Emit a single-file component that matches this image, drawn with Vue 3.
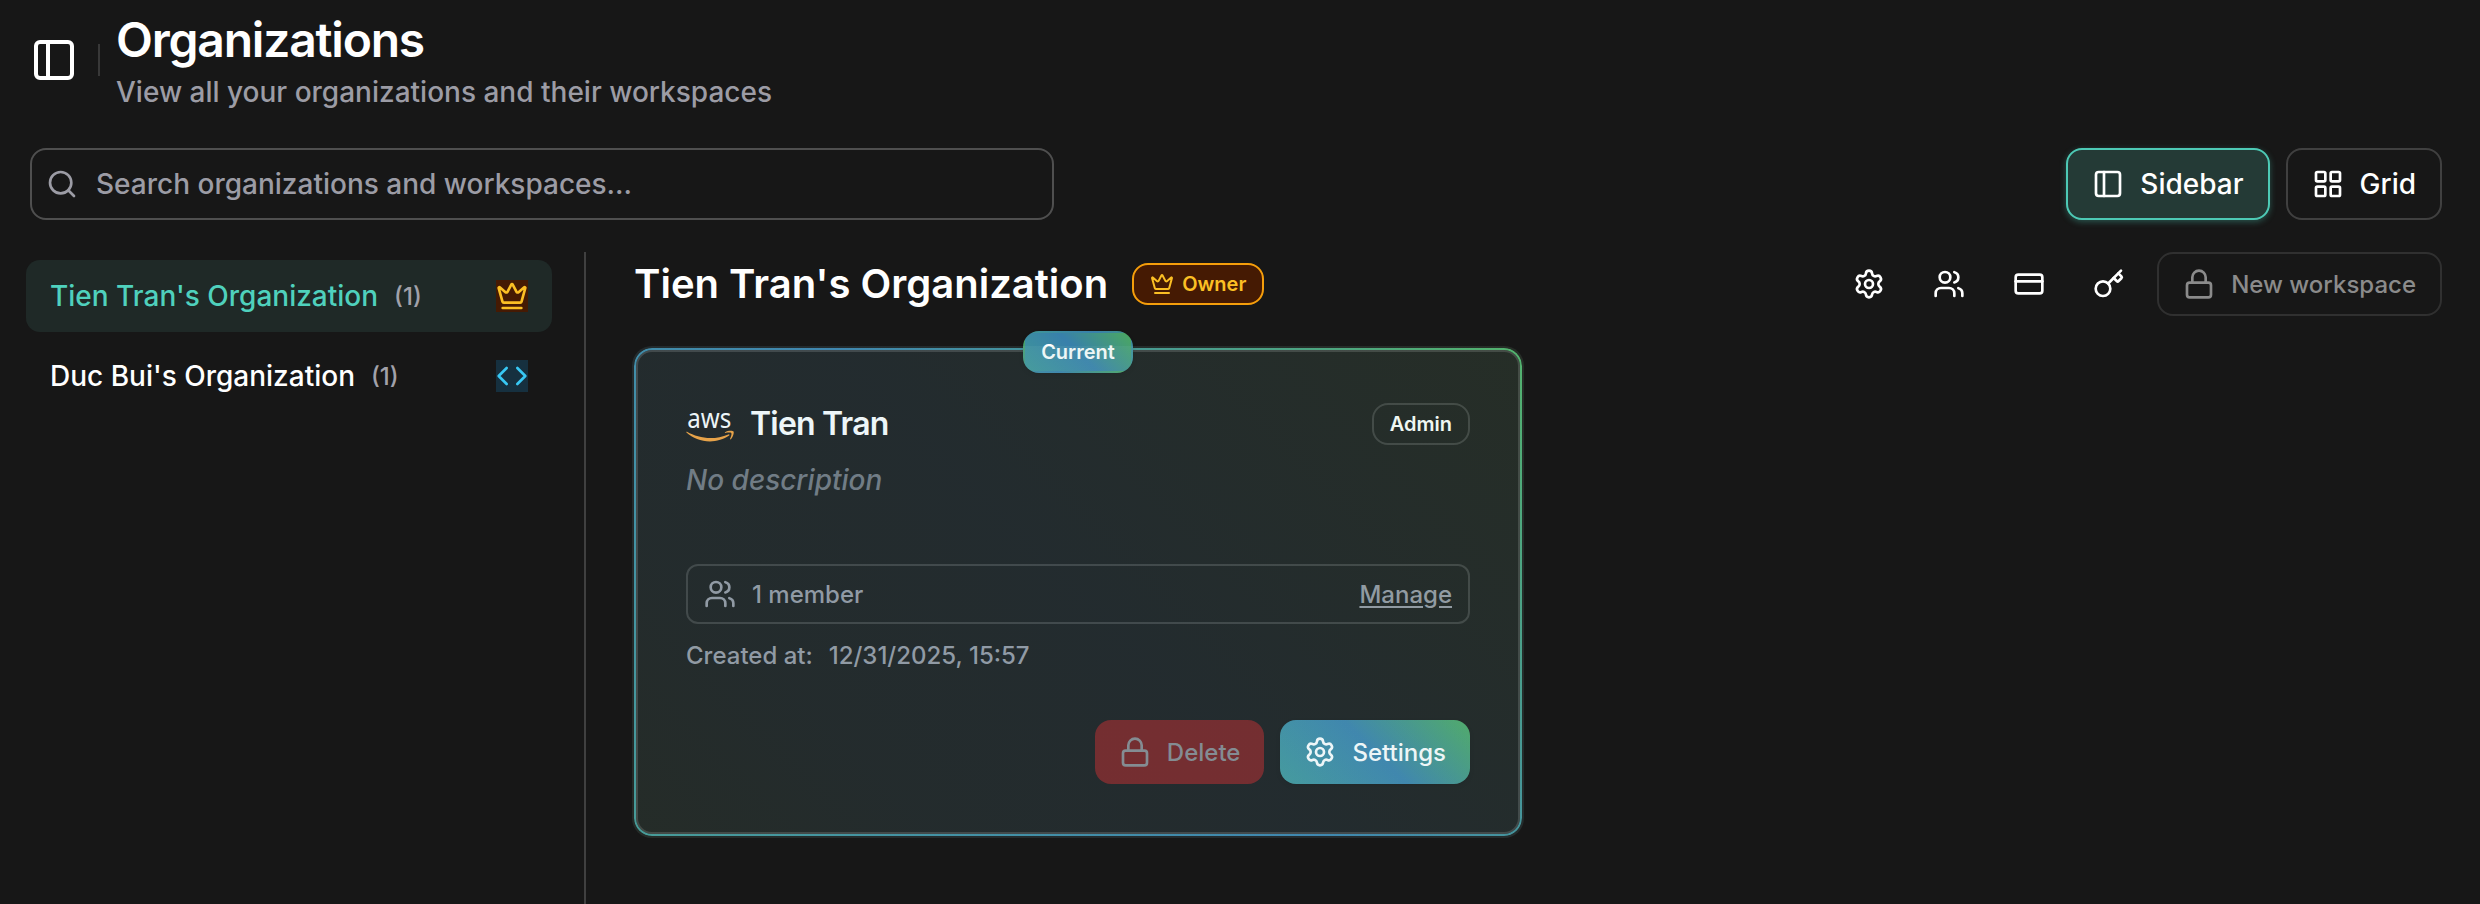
<script setup>
import { h } from 'vue'

const shapes = {
  panel: [['rect', { x: 3, y: 3, width: 18, height: 18, rx: 2 }], ['path', { d: 'M9 3v18' }]],
  search: [['circle', { cx: 11, cy: 11, r: 8 }], ['path', { d: 'm21 21-4.3-4.3' }]],
  grid: [
    ['rect', { x: 3, y: 3, width: 7, height: 7, rx: 1 }],
    ['rect', { x: 14, y: 3, width: 7, height: 7, rx: 1 }],
    ['rect', { x: 14, y: 14, width: 7, height: 7, rx: 1 }],
    ['rect', { x: 3, y: 14, width: 7, height: 7, rx: 1 }],
  ],
  crown: [
    ['path', { d: 'M11.562 3.266a.5.5 0 0 1 .876 0L15.39 8.87a1 1 0 0 0 1.516.294L21.183 5.5a.5.5 0 0 1 .798.519l-2.834 10.246a1 1 0 0 1-.956.734H5.81a1 1 0 0 1-.957-.734L2.02 6.02a.5.5 0 0 1 .798-.519l4.276 3.664a1 1 0 0 0 1.516-.294z' }],
    ['path', { d: 'M5 21h14' }],
  ],
  code: [['path', { d: 'm16 18 6-6-6-6' }], ['path', { d: 'm8 6-6 6 6 6' }]],
  gear: [
    ['path', { d: 'M9.671 4.136a2.34 2.34 0 0 1 4.659 0 2.34 2.34 0 0 0 3.319 1.915 2.34 2.34 0 0 1 2.33 4.033 2.34 2.34 0 0 0 0 3.831 2.34 2.34 0 0 1-2.33 4.033 2.34 2.34 0 0 0-3.319 1.915 2.34 2.34 0 0 1-4.659 0 2.34 2.34 0 0 0-3.32-1.915 2.34 2.34 0 0 1-2.33-4.033 2.34 2.34 0 0 0 0-3.831A2.34 2.34 0 0 1 6.35 6.051a2.34 2.34 0 0 0 3.319-1.915' }],
    ['circle', { cx: 12, cy: 12, r: 3 }],
  ],
  users: [
    ['path', { d: 'M16 21v-2a4 4 0 0 0-4-4H6a4 4 0 0 0-4 4v2' }],
    ['circle', { cx: 9, cy: 7, r: 4 }],
    ['path', { d: 'M22 21v-2a4 4 0 0 0-3-3.87' }],
    ['path', { d: 'M16 3.13a4 4 0 0 1 0 7.75' }],
  ],
  billing: [['rect', { x: 2, y: 5, width: 20, height: 14, rx: 2 }], ['path', { d: 'M2 10h20' }]],
  key: [
    ['path', { d: 'm15.5 7.5 2.3 2.3a1 1 0 0 0 1.4 0l2.1-2.1a1 1 0 0 0 0-1.4L19 4' }],
    ['path', { d: 'm21 2-9.6 9.6' }],
    ['circle', { cx: 7.5, cy: 15.5, r: 5.5 }],
  ],
  lock: [['rect', { x: 3, y: 11, width: 18, height: 11, rx: 2 }], ['path', { d: 'M7 11V7a5 5 0 0 1 10 0v4' }]],
}

const Icon = ({ name, size = 32, stroke = 2 }) =>
  h(
    'svg',
    {
      width: size, height: size, viewBox: '0 0 24 24', fill: 'none', stroke: 'currentColor',
      'stroke-width': stroke, 'stroke-linecap': 'round', 'stroke-linejoin': 'round',
    },
    shapes[name].map(([tag, attrs]) => h(tag, attrs)),
  )
Icon.props = ['name', 'size', 'stroke']

const organizations = [
  { name: "Tien Tran's Organization", count: 1, icon: 'crown', role: 'owner', active: true },
  { name: "Duc Bui's Organization", count: 1, icon: 'code', role: 'developer', active: false },
]
const actions = ['gear', 'users', 'billing', 'key']
</script>

<template>
  <div class="page">
    <header class="header">
      <Icon name="panel" :size="48" />
      <span class="header-rule"></span>
      <div>
        <h1>Organizations</h1>
        <p class="subtitle">View all your organizations and their workspaces</p>
      </div>
    </header>

    <div class="toolbar">
      <div class="search">
        <Icon name="search" />
        <span class="placeholder">Search organizations and workspaces...</span>
      </div>
      <div class="views">
        <button class="btn view selected"><Icon name="panel" /><span>Sidebar</span></button>
        <button class="btn view"><Icon name="grid" /><span>Grid</span></button>
      </div>
    </div>

    <div class="body">
      <nav class="orgs">
        <div v-for="org in organizations" :key="org.name" class="org" :class="{ active: org.active }">
          <span class="org-name">{{ org.name }}</span>
          <span class="org-count">({{ org.count }})</span>
          <span class="role" :class="org.role"><Icon :name="org.icon" /></span>
        </div>
      </nav>

      <main class="main">
        <div class="main-head">
          <h2>Tien Tran's Organization</h2>
          <span class="badge owner-badge"><Icon name="crown" :size="24" /><span>Owner</span></span>
          <div class="actions">
            <button v-for="a in actions" :key="a" class="icon-btn"><Icon :name="a" /></button>
            <button class="btn new"><Icon name="lock" /><span>New workspace</span></button>
          </div>
        </div>

        <section class="card">
          <span class="ring"></span>
          <span class="badge current"><span>Current</span></span>
          <div class="card-head">
            <svg class="aws" width="48" height="36" viewBox="0 0 48 36">
              <text x="1.2" y="21.9" textLength="44" lengthAdjust="spacingAndGlyphs">aws</text>
              <g transform="translate(0 6.9) scale(.1579)" fill="#f7a037">
                <path d="M273.5,143.7c-32.9,24.3-80.7,37.2-121.8,37.2c-57.6,0-109.5-21.3-148.7-56.7c-3.1-2.8-0.3-6.6,3.4-4.4c42.4,24.6,94.7,39.5,148.8,39.5c36.5,0,76.6-7.6,113.5-23.2C274.2,133.6,278.9,139.7,273.5,143.7z" />
                <path d="M287.2,128.1c-4.2-5.4-27.8-2.6-38.5-1.3c-3.2,0.4-3.7-2.4-0.8-4.5c18.8-13.2,49.7-9.4,53.3-5c3.6,4.5-1,35.4-18.6,50.2c-2.7,2.3-5.3,1.1-4.1-1.9C282.5,155.7,291.4,133.4,287.2,128.1z" />
              </g>
            </svg>
            <h3>Tien Tran</h3>
            <span class="badge admin"><span>Admin</span></span>
          </div>
          <p class="description">No description</p>
          <div class="members">
            <Icon name="users" />
            <span class="count">1 member</span>
            <a class="manage">Manage</a>
          </div>
          <p class="created"><span>Created at:</span><span>12/31/2025, 15:57</span></p>
          <div class="card-actions">
            <button class="btn delete"><Icon name="lock" /><span>Delete</span></button>
            <button class="btn settings"><Icon name="gear" /><span>Settings</span></button>
          </div>
          <span class="tint"></span>
        </section>
      </main>
    </div>
  </div>
</template>

<style>
body {
  background: #171717;
}
</style>

<style scoped>
.page {
  width: 2480px;
  height: 904px;
  overflow: hidden;
  display: flex;
  flex-direction: column;
  background: #171717;
  color: #fff;
  font-family: Inter, 'Liberation Sans', sans-serif;
  font-size: 28px;
}
.page * {
  box-sizing: border-box;
}
svg {
  flex: none;
  display: block;
  overflow: visible;
}
h1, h2, h3, p {
  margin: 0;
  white-space: nowrap;
}
.header {
  display: flex;
  align-items: center;
  height: 120px;
  padding-left: 30px;
}
.header-rule {
  width: 2px;
  height: 32px;
  margin: 0 16px 0 20px;
  background: #383838;
}
h1 {
  font-size: 48px;
  line-height: 64px;
  font-weight: 600;
  letter-spacing: -1.2px;
}
.subtitle {
  line-height: 40px;
  font-weight: 500;
  color: #9c9ca5;
}
.toolbar {
  display: flex;
  justify-content: space-between;
  height: 72px;
  margin: 28px 38px 0 30px;
}
.search {
  width: 1024px;
  display: flex;
  align-items: center;
  gap: 18px;
  padding-left: 14px;
  border: 2px solid #4f4f4f;
  border-radius: 16px;
  color: #9c9ca5;
}
.placeholder {
  font-weight: 500;
}
.views {
  display: flex;
  gap: 16px;
}
.btn {
  display: flex;
  align-items: center;
  gap: 16px;
  padding: 0 24px;
  border: 2px solid transparent;
  border-radius: 16px;
  background: transparent;
  color: #fff;
  font-family: inherit;
  font-size: 24px;
  font-weight: 500;
  white-space: nowrap;
}
.view {
  font-size: 28px;
  border-color: #404040;
}
.view.selected {
  border-color: #4dc9b5;
  background: #243a36;
  box-shadow: 0 2px 6px rgba(77, 201, 181, 0.35);
}
.body {
  flex: 1;
  display: flex;
  margin-top: 32px;
}
.orgs {
  width: 586px;
  padding: 8px 32px 0 26px;
  border-right: 2px solid #404040;
  display: flex;
  flex-direction: column;
  gap: 8px;
}
.org {
  display: flex;
  align-items: center;
  height: 72px;
  padding: 0 24px;
  border-radius: 14px;
  font-weight: 500;
}
.org.active {
  background: #1f2927;
  color: #4fd1bd;
}
.org-count {
  margin-left: 16px;
  color: #a1a1aa;
  font-size: 24px;
}
.role {
  margin-left: auto;
}
.role.owner {
  color: #fbbf24;
  background: #451a03;
}
.role.developer {
  color: #38c8f4;
  background: #16303f;
}
.main {
  flex: 1;
  padding: 0 38px 0 48px;
}
.main-head {
  display: flex;
  align-items: center;
  height: 64px;
}
h2 {
  font-size: 40px;
  line-height: 56px;
  font-weight: 600;
}
.badge {
  display: inline-flex;
  align-items: center;
  justify-content: center;
  height: 42px;
  padding: 0 16px;
  border: 2px solid transparent;
  border-radius: 16px;
  font-size: 20px;
  font-weight: 600;
}
.owner-badge {
  gap: 8px;
  margin-left: 24px;
  border-color: #f59e0b;
  background: #451a03;
  color: #fbbf24;
}
.actions {
  display: flex;
  gap: 16px;
  height: 64px;
  margin-left: auto;
}
.icon-btn {
  width: 64px;
  display: flex;
  align-items: center;
  justify-content: center;
  padding: 0;
  border: 0;
  background: none;
  color: #fff;
}
.new {
  border-color: #303030;
  color: #8b8b8b;
}
.card {
  position: relative;
  width: 884px;
  height: 484px;
  margin: 34px 0 0 2px;
  padding: 48px;
  border: 2px solid #3a3a3a;
  border-radius: 16px;
}
.current {
  position: absolute;
  top: -21px;
  left: 50%;
  width: 110px;
  transform: translateX(-50%);
  background: linear-gradient(45deg, #3f9797, #3880ab 50%, #4ba860);
  box-shadow: 0 2px 4px rgba(0, 0, 0, 0.15);
}
.card-head {
  display: flex;
  align-items: center;
  height: 48px;
}
.aws text {
  font-family: 'Noto Sans', sans-serif;
  font-size: 28px;
  fill: #fff;
}
h3 {
  margin-left: 16px;
  font-size: 32px;
  line-height: 48px;
  font-weight: 600;
  letter-spacing: -0.8px;
}
.admin {
  margin-left: auto;
  border-color: #3a3a3a;
}
.description {
  margin-top: 12px;
  line-height: 40px;
  font-style: italic;
  font-weight: 500;
  color: #70747c;
}
.members {
  display: flex;
  align-items: center;
  height: 60px;
  margin-top: 64px;
  padding: 0 16px;
  border: 2px solid #3a3a3a;
  border-radius: 12px;
  color: #9496a0;
  font-size: 24px;
  font-weight: 500;
}
.count {
  margin-left: 16px;
}
.manage {
  margin-left: auto;
  text-decoration: underline;
  text-underline-offset: 3px;
}
.created {
  display: flex;
  gap: 16px;
  margin-top: 16px;
  line-height: 32px;
  font-size: 24px;
  font-weight: 500;
  color: #9496a0;
}
.card-actions {
  display: flex;
  justify-content: flex-end;
  gap: 16px;
  height: 64px;
  margin-top: 48px;
}
.card-actions .btn {
  border: 0;
}
.delete {
  background: #741a1a;
  color: #86868a;
}
.settings {
  background: linear-gradient(45deg, #3f9797, #3880ab 50%, #4ba860);
  box-shadow: 0 2px 4px rgba(0, 0, 0, 0.15);
}
.tint {
  position: absolute;
  inset: -6px;
  border-radius: 20px;
  background: linear-gradient(45deg, rgb(130 185 155 / 13%), rgb(120 181 192 / 13%) 22%, rgb(115 181 206 / 13%) 50%, rgb(138 200 146 / 13%));
  pointer-events: none;
}
.ring {
  position: absolute;
  inset: -4px;
  padding: 2px;
  border-radius: 18px;
  background: linear-gradient(45deg, #3f9797, #3880ab 50%, #4bb068);
  mask: linear-gradient(#000 0 0) content-box exclude, linear-gradient(#000 0 0);
  pointer-events: none;
}
</style>
